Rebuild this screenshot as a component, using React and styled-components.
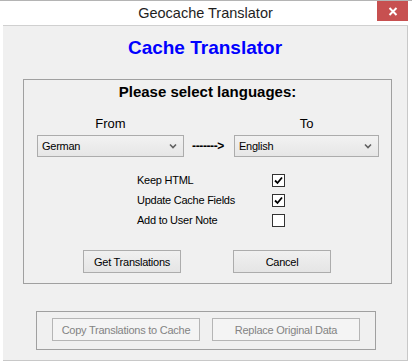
import { Fragment } from "react";
import styled, { createGlobalStyle } from "styled-components";

const GlobalStyle = createGlobalStyle`
  html, body {
    margin: 0;
    padding: 0;
    background: #ffffff;
  }
  body {
    font-family: "Liberation Sans", Arial, sans-serif;
  }
`;

const Window = styled.div`
  width: 412px;
  height: 362px;
  box-sizing: border-box;
  border-top: 1px solid #b4b4b4;
  background: #ffffff;
  display: flex;
  flex-direction: column;
`;

const TitleBar = styled.div`
  height: 24px;
  display: grid;
  grid-template-columns: 1fr auto 1fr;
  align-items: start;
  border-bottom: 1px solid #d0d0d0;
  margin: 0 4px 0 3px;
`;

const TitleText = styled.div`
  grid-column: 2;
  font-family: "Liberation Sans", Arial, sans-serif;
  font-size: 14.5px;
  line-height: 24px;
  color: #1e1e1e;
`;

const CloseButton = styled.div`
  grid-column: 3;
  justify-self: end;
  width: 31px;
  height: 20px;
  background: #c75050;
  display: flex;
  align-items: center;
  justify-content: center;
`;

const Client = styled.div`
  flex: 1;
  margin: 0 4px 1px 3px;
  background: #f0f0f0;
  border-right: 1px solid #c8c8c8;
  border-bottom: 1px solid #c8c8c8;
  display: flex;
  flex-direction: column;
`;

const Heading = styled.div`
  margin-top: 11px;
  text-align: center;
  font-family: "Liberation Sans", Arial, sans-serif;
  font-weight: 700;
  font-size: 19px;
  line-height: 22px;
  color: #0000ff;
`;

const GroupBox = styled.div`
  box-sizing: border-box;
  width: ${(p) => p.$width}px;
  margin-left: ${(p) => p.$left}px;
  margin-top: ${(p) => p.$top}px;
  border: 1px solid #a0a0a0;
  padding: ${(p) => p.$padding};
  display: flex;
  flex-direction: column;
`;

const GroupTitle = styled.div`
  text-align: center;
  font-weight: 700;
  font-size: 15px;
  line-height: 16px;
  color: #000;
`;

const LangGrid = styled.div`
  margin-top: 16px;
  padding-left: 13px;
  display: grid;
  grid-template-columns: 147px 50px 145px;
  grid-template-rows: 16px 22px;
  row-gap: 3px;
  align-items: center;
`;

const LangLabel = styled.div`
  text-align: center;
  font-size: 13px;
  line-height: 16px;
  color: #000;
`;

const Combo = styled.div`
  box-sizing: border-box;
  height: 22px;
  border: 1px solid #acacac;
  background: linear-gradient(#f2f2f2, #e6e6e6);
  display: flex;
  align-items: center;
  justify-content: space-between;
  padding: 0 6px 0 4px;
  font-size: 11px;
  letter-spacing: -0.25px;
  color: #000;
`;

const Arrow = styled.div`
  text-align: center;
  font-size: 12px;
  font-weight: 700;
  letter-spacing: -0.4px;
  color: #000;
  padding-right: 2px;
`;

const OptionGrid = styled.div`
  margin-top: 13px;
  margin-left: 113px;
  display: grid;
  grid-template-columns: 135px 13px;
  grid-auto-rows: 20px;
  align-items: center;
`;

const OptionLabel = styled.div`
  font-size: 11px;
  letter-spacing: -0.25px;
  color: #000;
`;

const Check = styled.div`
  box-sizing: border-box;
  width: 13px;
  height: 13px;
  border: 1px solid #333;
  background: #fff;
  display: flex;
  align-items: center;
  justify-content: center;
`;

const ButtonRow = styled.div`
  display: flex;
  margin-top: ${(p) => p.$top || 0}px;
  padding-left: ${(p) => p.$left}px;
  gap: ${(p) => p.$gap}px;
`;

const Button = styled.div`
  box-sizing: border-box;
  width: ${(p) => p.$width}px;
  height: 23px;
  border: 1px solid ${(p) => (p.$disabled ? "#b5b5b5" : "#acacac")};
  background: ${(p) =>
    p.$disabled ? "#f4f4f4" : "linear-gradient(#f0f0f0, #e5e5e5)"};
  display: flex;
  align-items: center;
  justify-content: center;
  font-size: 11px;
  letter-spacing: -0.25px;
  color: ${(p) => (p.$disabled ? "#838383" : "#000")};
`;

const Chevron = () => (
  <svg width="8" height="6" viewBox="0 0 8 6">
    <path d="M1 1.5 L4 4.5 L7 1.5" fill="none" stroke="#606060" strokeWidth="1.6" />
  </svg>
);

const Tick = () => (
  <svg width="9" height="9" viewBox="0 0 9 9">
    <path d="M1 4.5 L3.5 7 L8 1.5" fill="none" stroke="#000" strokeWidth="1.8" />
  </svg>
);

const options = [
  { label: "Keep HTML", checked: true },
  { label: "Update Cache Fields", checked: true },
  { label: "Add to User Note", checked: false },
];

export default function App() {
  return (
    <>
      <GlobalStyle />
      <Window>
        <TitleBar>
          <TitleText>Geocache Translator</TitleText>
          <CloseButton>
            <svg width="10" height="9" viewBox="0 0 10 9">
              <path d="M1.5 1 L8.5 8 M8.5 1 L1.5 8" stroke="#fff" strokeWidth="2" />
            </svg>
          </CloseButton>
        </TitleBar>
        <Client>
          <Heading>Cache Translator</Heading>
          <GroupBox $width={369} $left={20} $top={20} $padding="4px 0 10px 0">
            <GroupTitle>Please select languages:</GroupTitle>
            <LangGrid>
              <LangLabel>From</LangLabel>
              <span />
              <LangLabel>To</LangLabel>
              <Combo>
                German
                <Chevron />
              </Combo>
              <Arrow>-------&gt;</Arrow>
              <Combo>
                English
                <Chevron />
              </Combo>
            </LangGrid>
            <OptionGrid>
              {options.map((o) => (
                <Fragment key={o.label}>
                  <OptionLabel>{o.label}</OptionLabel>
                  <Check>{o.checked && <Tick />}</Check>
                </Fragment>
              ))}
            </OptionGrid>
            <ButtonRow $top={20} $left={59} $gap={52}>
              <Button $width={98}>Get Translations</Button>
              <Button $width={98}>Cancel</Button>
            </ButtonRow>
          </GroupBox>
          <GroupBox $width={340} $left={33} $top={27} $padding="6px 0 8px 0">
            <ButtonRow $left={15} $gap={12}>
              <Button $width={148} $disabled>
                Copy Translations to Cache
              </Button>
              <Button $width={148} $disabled>
                Replace Original Data
              </Button>
            </ButtonRow>
          </GroupBox>
        </Client>
      </Window>
    </>
  );
}
